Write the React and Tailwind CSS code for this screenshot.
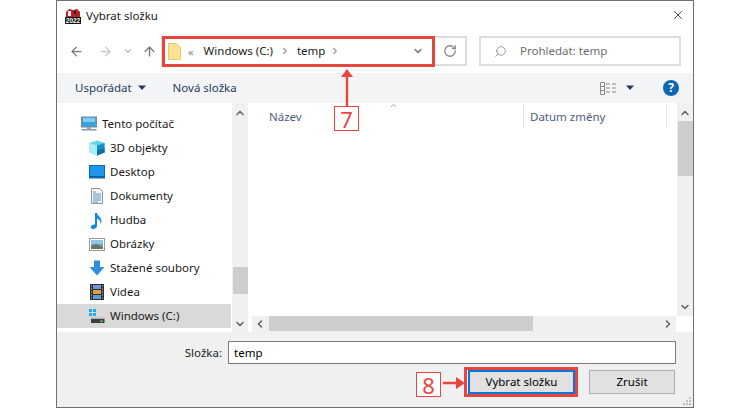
import React from "react";
import { ChevronUp, ChevronDown, ChevronLeft, ChevronRight, ArrowLeft, ArrowRight, ArrowUp, RotateCw, Search, X } from "lucide-react";

const Caret = ({ className = "" }) => (
  <svg width="10" height="6" viewBox="0 0 10 6" className={className}><path d="M1 0.5h8L5 5z" fill="#1e3a64" /></svg>
);

const PcIcon = () => (
  <svg width="16" height="16" viewBox="0 0 16 16"><rect x="0.5" y="1" width="15" height="10" fill="#3aa0e0" stroke="#7b8b99" /><rect x="2" y="2" width="12" height="4" fill="#7fd0f5" /><rect x="6" y="11" width="4" height="2" fill="#9aa5ae" /><rect x="0.5" y="13" width="15" height="1.6" fill="#8fa0ad" /></svg>
);
const CubeIcon = () => (
  <svg width="16" height="16" viewBox="0 0 16 16"><path d="M8 0.5L15.5 3v9.5L8 15.5 0.5 12.5V3z" fill="#5fd6e6" /><path d="M8 5.5L15.5 3v9.5L8 15.5z" fill="#1592c4" /><path d="M8 10.5L15.5 8v4.5L8 15.5z" fill="#0c6f9e" /><path d="M0.5 3L8 5.5v10L0.5 12.5z" fill="#a8eef2" /></svg>
);
const DesktopIcon = () => (
  <svg width="16" height="14" viewBox="0 0 16 14"><rect x="0.5" y="0.5" width="15" height="12.5" fill="#1e95ee" stroke="#0c68b8" /><rect x="1" y="11" width="14" height="1.6" fill="#0c5ea6" /></svg>
);
const DocIcon = () => (
  <svg width="12" height="16" viewBox="0 0 12 16"><path d="M0.5 0.5h8l3 3v12h-11z" fill="#f4f6f8" stroke="#8c9298" /><path d="M2 4h3M2 6h8M2 8h8M2 10h8M2 12h8M2 14h5" stroke="#4f86b8" strokeWidth="0.9" /></svg>
);
const MusicIcon = () => (
  <svg width="14" height="17" viewBox="0 0 14 17"><path d="M5 1h2c.3 3 4.5 4 4.5 8.5 0 1-.3 1.8-.8 2.5.2-3-1.700-4.500-3.700-5.500v7.500c0 1.600-1.800 3-3.800 3S.5 16 1 14.500c.5-1.500 2.500-2.300 4-1.800z" fill="#1588e6" /></svg>
);
const PicIcon = () => (
  <svg width="16" height="13" viewBox="0 0 16 13"><rect x="0.5" y="0.5" width="15" height="12" fill="#fff" stroke="#9a9a9a" /><rect x="2" y="2" width="12" height="4" fill="#8ec6e6" /><rect x="2" y="6" width="12" height="5" fill="#8aa28e" /><path d="M2 8l5-2 7 3v2H2z" fill="#5c7a72" /></svg>
);
const DownIcon = () => (
  <svg width="16" height="16" viewBox="0 0 16 16"><path d="M5 0.5h6V7h4.500L8 15.500.5 7H5z" fill="#2f8fe0" /></svg>
);
const FilmIcon = () => (
  <svg width="14" height="16" viewBox="0 0 14 16"><rect width="14" height="16" fill="#2b2f36" /><rect x="3" y="1" width="8" height="4" fill="#7e8fd8" /><rect x="3" y="6" width="8" height="4" fill="#d6a640" /><rect x="3" y="11" width="8" height="4" fill="#5f9bd0" /><path d="M1 2h1M1 5h1M1 8h1M1 11h1M1 14h1M12 2h1M12 5h1M12 8h1M12 11h1M12 14h1" stroke="#d8d8d8" /></svg>
);
const DriveIcon = () => (
  <svg width="16" height="16" viewBox="0 0 16 16"><rect x="0" y="1" width="3" height="3" fill="#18aef0" /><rect x="4" y="1" width="3" height="3" fill="#18aef0" /><rect x="0" y="5" width="3" height="3" fill="#18aef0" /><rect x="4" y="5" width="3" height="3" fill="#18aef0" /><rect x="2" y="9.500" width="13.500" height="1.500" fill="#b5b5b5" /><rect x="2" y="11" width="13.500" height="4" fill="#3e3e3e" /><rect x="11" y="12.500" width="3" height="1.300" fill="#55d855" /></svg>
);

const items = [
  { label: "3D objekty", icon: <CubeIcon /> },
  { label: "Desktop", icon: <DesktopIcon /> },
  { label: "Dokumenty", icon: <DocIcon /> },
  { label: "Hudba", icon: <MusicIcon /> },
  { label: "Obrázky", icon: <PicIcon /> },
  { label: "Stažené soubory", icon: <DownIcon /> },
  { label: "Videa", icon: <FilmIcon /> },
];

export default function App() {
  return (
    <div className="relative w-[750px] h-[408px] bg-white overflow-hidden text-[11.5px] text-[#1a1a1a]" style={{ fontFamily: '"Noto Sans", "Open Sans", sans-serif' }}>
      <div className="ml-[56px] w-[638px] h-[408px] border border-[#6f6f6f] flex flex-col bg-white">
        {/* title bar */}
        <div className="h-[30px] flex items-center pl-[8px] pr-[8px] shrink-0">
          <svg width="16" height="16" viewBox="0 0 16 16" className="mr-[5px]">
            <path d="M1 4l3-3 4 1 4-1 3 3v6H1z" fill="#b3212a" />
            <rect x="3" y="3" width="3" height="5" fill="#f2f2f2" />
            <rect x="9" y="3" width="2" height="3" fill="#3a1a1a" />
            <rect x="0" y="9" width="16" height="7" fill="#111" />
            <text x="8" y="15" textAnchor="middle" fontSize="6.500" fontWeight="700" fill="#fff" fontFamily="Liberation Sans, sans-serif">2022</text>
          </svg>
          <span className="leading-none">Vybrat složku</span>
          <X size={14} strokeWidth={1.200} className="ml-auto -mt-[2px] text-black" />
        </div>
        {/* nav row */}
        <div className="h-[30px] mt-[5px] flex items-center shrink-0">
          <div className="w-[104px] pl-[12px] flex items-center text-[#7a7a7a] shrink-0">
            <ArrowLeft size={15} strokeWidth={2} />
            <ArrowRight size={15} strokeWidth={2} className="ml-[14px] text-[#c8c8c8]" />
            <ChevronDown size={10} strokeWidth={2.500} className="ml-[10px] text-[#a0a0a0]" />
            <ArrowUp size={15} strokeWidth={2.200} className="ml-[9px] text-[#7a7a7a]" />
          </div>
          <div className="w-[306px] h-[30px] border-2 border-[#dcdcdc] flex items-center shrink-0">
            <svg width="13" height="17" viewBox="0 0 13 17" className="ml-[5px] shrink-0"><path d="M0.500 0.500h8l4 4v12H0.500z" fill="#fbe391" stroke="#e8cc6e" /></svg>
            <span className="ml-[7px] text-[#888] text-[11px] leading-none">«</span>
            <span className="ml-[10px]">Windows (C:)</span>
            <ChevronRight size={10} strokeWidth={3} className="ml-[7px] text-[#999]" />
            <span className="ml-[7px]">temp</span>
            <ChevronRight size={10} strokeWidth={3} className="ml-[5px] text-[#999]" />
            <ChevronDown size={12} strokeWidth={3} className="ml-auto mr-[9px] text-[#777]" />
            <span className="w-[2px] h-full bg-[#dcdcdc]" />
            <RotateCw size={14} strokeWidth={2.200} className="mx-[8px] text-[#888] shrink-0" />
          </div>
          <div className="ml-[12px] w-[202px] h-[30px] border-2 border-[#dcdcdc] flex items-center shrink-0">
            <Search size={13} strokeWidth={1.400} className="ml-[13px] text-[#8a7f8a] -scale-x-100" />
            <span className="ml-[13px] text-[#6d6d6d]">Prohledat: temp</span>
          </div>
        </div>
        {/* command bar */}
        <div className="h-[30px] mt-[7px] bg-[#f3f4f6] flex items-center pl-[18px] shrink-0">
          <span className="text-[#1f3a5f]">Uspořádat</span>
          <Caret className="ml-[5px]" />
          <span className="ml-[26px] text-[#1f3a5f]">Nová složka</span>
          <svg width="16" height="13" viewBox="0 0 16 13" className="ml-auto"><path d="M0.500 0.500h4v12h-4zM0.500 4.500h4M0.500 8.500h4" fill="none" stroke="#8a8a8a" /><path d="M6 2h4M6 6h4M6 10h4M12 2h4M12 6h4M12 10h4" stroke="#8a8a8a" /></svg>
          <Caret className="ml-[9px]" />
          <span className="ml-[28px] mr-[14px] w-[16px] h-[16px] rounded-full bg-[#0f67b1] text-white text-[12px] font-bold flex items-center justify-center leading-none">?</span>
        </div>
        {/* panes */}
        <div className="flex h-[229px] shrink-0">
          <div className="w-[174px] pt-[9px] shrink-0 flex flex-col">
            <div className="h-[24px] flex items-center pl-[24px] gap-[5px]"><PcIcon /><span>Tento počítač</span></div>
            {items.map((it) => (
              <div key={it.label} className="h-[24px] flex items-center pl-[32px]">
                <span className="w-[16px] flex justify-center shrink-0">{it.icon}</span>
                <span className="ml-[5px]">{it.label}</span>
              </div>
            ))}
            <div className="h-[24px] flex items-center pl-[32px] bg-[#d9d9d9]">
              <span className="w-[16px] flex justify-center shrink-0"><DriveIcon /></span>
              <span className="ml-[5px]">Windows (C:)</span>
            </div>
          </div>
          <div className="w-[16px] ml-[1px] bg-[#f0f0f0] flex flex-col items-center shrink-0 h-[229px]">
            <ChevronUp size={12} strokeWidth={3} className="mt-[4px] text-[#606060]" />
            <div className="w-[15px] h-[27px] bg-[#cdcdcd] mt-[148px]" />
            <ChevronDown size={12} strokeWidth={3} className="mt-auto mb-[2px] text-[#606060]" />
          </div>
          <div className="flex-1 flex flex-col min-w-0 ml-[4px]">
            <div className="flex flex-1 min-h-0">
              <div className="flex-1 min-w-0 relative">
                <div className="h-[24px] mt-[1px] flex text-[#4c607a]">
                  <div className="w-[272px] pl-[17px] pt-[4px] border-r border-[#e5e5e5] relative">
                    Název
                    <ChevronUp size={9} strokeWidth={1.500} className="absolute left-[137px] -top-[3px] text-[#666]" />
                  </div>
                  <div className="w-[143px] pl-[6px] pt-[4px] border-r border-[#e5e5e5]">Datum změny</div>
                </div>
              </div>
              <div className="w-[16px] bg-[#f0f0f0] flex flex-col items-center shrink-0">
                <ChevronUp size={12} strokeWidth={3} className="mt-[4px] text-[#606060]" />
                <div className="w-[15px] h-[55px] bg-[#cdcdcd] mt-[2px]" />
                <ChevronDown size={12} strokeWidth={3} className="mt-auto mb-[3px] text-[#606060]" />
              </div>
            </div>
            <div className="h-[16px] flex shrink-0">
              <div className="w-[424px] bg-[#f0f0f0] flex items-start">
                <ChevronLeft size={12} strokeWidth={3} className="ml-[2px] mt-[2px] text-[#606060]" />
                <div className="ml-[3px] w-[264px] h-[15px] bg-[#cdcdcd]" />
                <ChevronRight size={12} strokeWidth={3} className="ml-auto mr-[2px] mt-[2px] text-[#606060]" />
              </div>
            </div>
          </div>
        </div>
        {/* bottom */}
        <div className="flex-1 bg-[#f0f0f0] relative">
          <div className="flex items-center pt-[9px]">
            <span className="w-[165px] text-right shrink-0">Složka:</span>
            <div className="ml-[6px] w-[448px] h-[23px] border border-[#7a7a7a] bg-white flex items-center pl-[5px] text-black shrink-0">temp</div>
          </div>
          <div className="flex mt-[6px] pl-[411px]">
            <button className="w-[107px] h-[24px] border-2 border-[#0078d7] bg-[#e1e1e1] flex items-center justify-center text-black">Vybrat složku</button>
            <button className="ml-[14px] w-[86px] h-[24px] border border-[#adadad] bg-[#e1e1e1] flex items-center justify-center text-black">Zrušit</button>
          </div>
          <svg width="10" height="10" viewBox="0 0 10 10" className="absolute right-[1px] bottom-[1px]"><path d="M7 1h2v2H7zM4 4h2v2H4zM7 4h2v2H7zM1 7h2v2H1zM4 7h2v2H4zM7 7h2v2H7z" fill="#bdbdbd" /></svg>
        </div>
      </div>

      {/* annotations */}
      <div className="absolute left-[162px] top-[36px] w-[273px] h-[31px] border-[3px] border-[#e8453f]" />
      <svg width="16" height="37" viewBox="0 0 16 37" className="absolute left-[339px] top-[69px]"><path d="M8 0l6 8H9.200v29H6.800V8H2z" fill="#e8453f" /></svg>
      <div className="absolute left-[334px] top-[106px] w-[25px] h-[25px] border border-[#e8453f] bg-white flex items-center justify-center text-[#e8453f] text-[22px] leading-none">7</div>
      <div className="absolute left-[464px] top-[367px] w-[114px] h-[30px] border-[3px] border-[#e8453f]" />
      <div className="absolute left-[416px] top-[372px] w-[25px] h-[25px] border border-[#e8453f] bg-white flex items-center justify-center text-[#e8453f] text-[22px] leading-none">8</div>
      <svg width="22" height="12" viewBox="0 0 22 12" className="absolute left-[443px] top-[377px]"><path d="M0 4.800h13V0l9 6-9 6V7.200H0z" fill="#e8453f" /></svg>
    </div>
  );
}
